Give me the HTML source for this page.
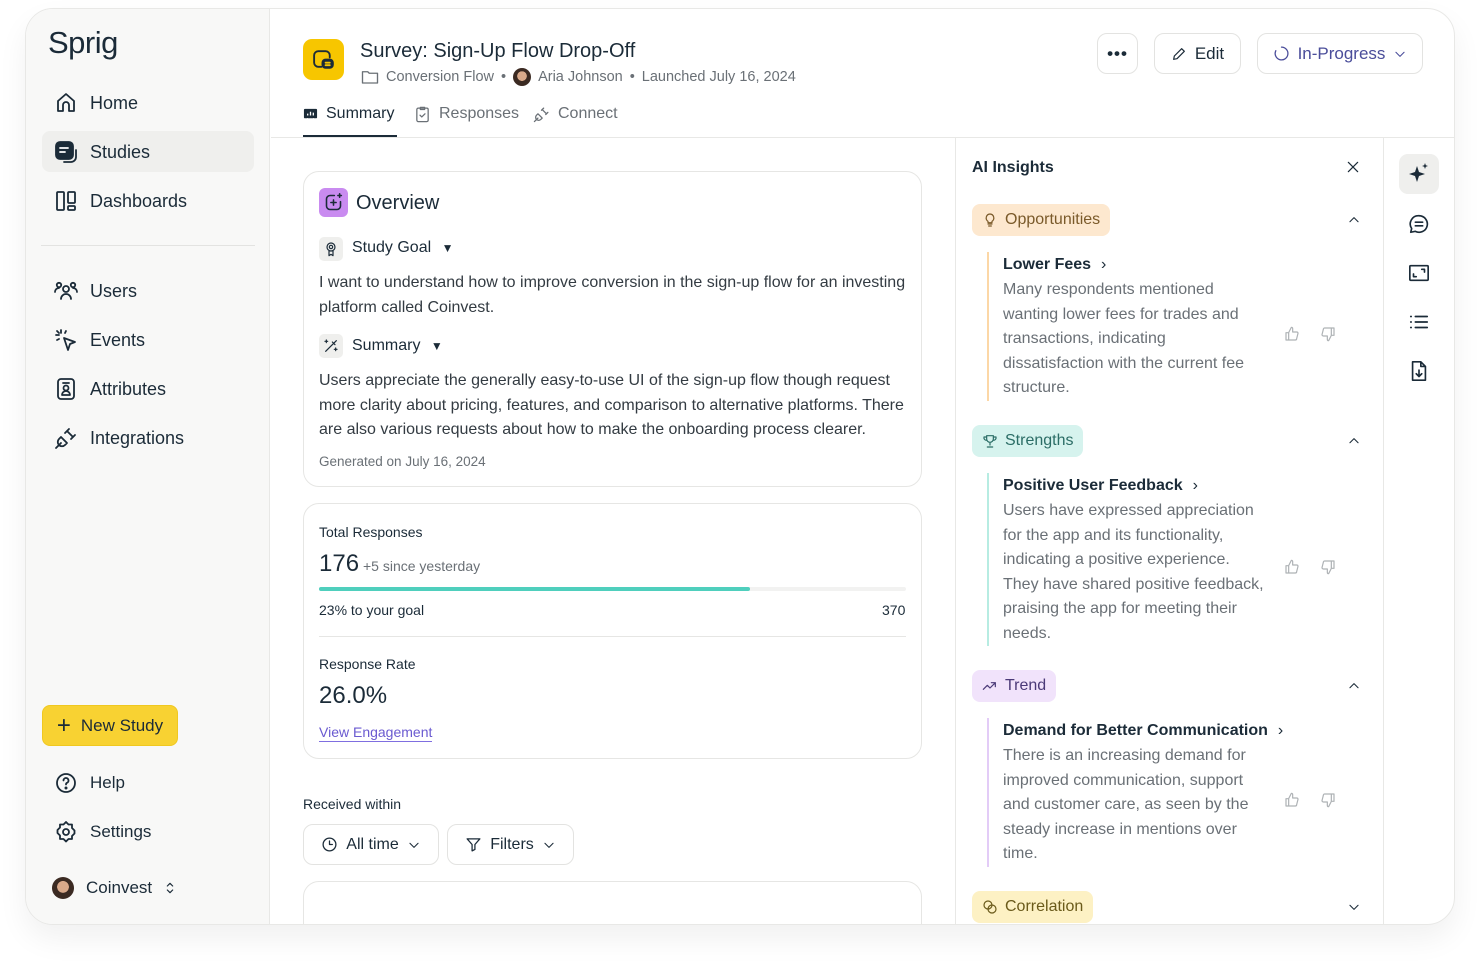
<!DOCTYPE html>
<html><head><meta charset="utf-8"><style>
*{box-sizing:border-box;margin:0;padding:0}
body{width:1480px;height:967px;background:#fff;font-family:"Liberation Sans",sans-serif;color:#1b2b38;position:relative;overflow:hidden}
.a{position:absolute}
.frame{left:25px;top:8px;width:1430px;height:917px;border:1px solid #e8e8e6;border-radius:28px;overflow:hidden;background:#fff;box-shadow:0 14px 30px rgba(0,0,0,.06)}
.side{left:0;top:0;width:244px;height:917px;background:#f8f8f7;border-right:1px solid #e8e8e6}
.nav{position:absolute;left:28px;font-size:18px;display:flex;align-items:center;gap:12px}
.nav svg{width:24px;height:24px;fill:none;stroke:#1b2b38;stroke-width:1.8;stroke-linecap:round;stroke-linejoin:round}
.ic{fill:none;stroke:currentColor;stroke-width:1.8;stroke-linecap:round;stroke-linejoin:round}
.card{position:absolute;background:#fff;border:1px solid #e6e6e4;border-radius:16px}
.btn{position:absolute;border:1px solid #e3e3e1;border-radius:10px;background:#fff;display:flex;align-items:center;justify-content:center;gap:8px;font-size:17px}
.grey{color:#6a7076}
.pill{position:absolute;left:16px;height:32px;border-radius:8px;display:flex;align-items:center;gap:7px;padding:0 10px;font-size:16px}
.item{position:absolute;left:31px;padding-left:14px;border-left:2px solid}
.item h4{font-size:16px;font-weight:bold;line-height:26px;display:flex;align-items:center;gap:10px}
.item p{font-size:16px;line-height:24.5px;color:#6a7076;width:265px}
.chev{position:absolute;left:390px;width:14px;height:14px}
.th{position:absolute;left:328px;width:16px;height:16px;stroke:#aeb2b5}
.td{position:absolute;left:364px;width:16px;height:16px;stroke:#aeb2b5}
</style></head><body>
<div class="a frame">
 <div class="a side">
  <div class="a" style="left:22px;top:16px;font-size:31px;letter-spacing:-0.5px;color:#1b2b38">Sprig</div>
  <div class="nav" style="top:82px"><svg viewBox="0 0 24 24"><path d="M4 20V10l8-7 8 7v10h-5v-6a3 3 0 0 0-6 0v6z"/></svg>Home</div>
  <div class="a" style="left:16px;top:122px;width:212px;height:41px;background:#efefed;border-radius:8px"></div>
  <div class="nav" style="top:131px"><svg viewBox="0 0 24 24"><rect x="2" y="2" width="17" height="17" rx="4" fill="#1b2b38"/><path d="M6 8h8M6 12h5" stroke="#fff"/><path d="M22 10v7a5 5 0 0 1-5 5h-7"/></svg>Studies</div>
  <div class="nav" style="top:180px"><svg viewBox="0 0 24 24"><rect x="3" y="3" width="7" height="18" rx="1"/><rect x="14" y="3" width="7" height="11" rx="1"/><rect x="14" y="17" width="7" height="4" rx="1"/></svg>Dashboards</div>
  <div class="a" style="left:15px;top:236px;width:214px;height:1px;background:#e3e3e1"></div>
  <div class="nav" style="top:270px"><svg viewBox="0 0 24 24"><circle cx="12" cy="10" r="3"/><path d="M7 20a5 5 0 0 1 10 0"/><circle cx="5" cy="6" r="2.2"/><circle cx="19" cy="6" r="2.2"/><path d="M1 13a4 4 0 0 1 4-4M23 13a4 4 0 0 0-4-4"/></svg>Users</div>
  <div class="nav" style="top:319px"><svg viewBox="0 0 24 24"><path d="M10 10l11 4-5 2-2 6z"/><path d="M7 2v3M2 7h3M3 3l2 2M12 3l-1 2M3 12l2-1"/></svg>Events</div>
  <div class="nav" style="top:368px"><svg viewBox="0 0 24 24"><rect x="4" y="2" width="16" height="20" rx="3"/><path d="M9 6h6"/><circle cx="12" cy="11" r="2.5"/><path d="M8 18a4 4 0 0 1 8 0z"/></svg>Attributes</div>
  <div class="nav" style="top:417px"><svg viewBox="0 0 24 24"><path d="M2 22l5-5M7 11l6 6-2 2a4 4 0 0 1-6-6zM13 5l6 6M15 3l-3 3M21 9l-3 3M11 7l4-4M17 13l4-4"/></svg>Integrations</div>
  <div class="a" style="left:16px;top:696px;width:136px;height:41px;background:#f8d232;border-radius:8px;border:1px solid #f0c820;display:flex;align-items:center;justify-content:center;gap:10px;font-size:17px"><span style="font-size:24px;font-weight:300;line-height:1">+</span>New Study</div>
  <div class="nav" style="top:762px;font-size:17px"><svg viewBox="0 0 24 24"><circle cx="12" cy="12" r="9"/><path d="M9.5 9.5a2.5 2.5 0 1 1 3.5 2.3c-.7.3-1 .9-1 1.7"/><circle cx="12" cy="17" r=".6" fill="#1b2b38"/></svg>Help</div>
  <div class="nav" style="top:811px;font-size:17px"><svg viewBox="0 0 24 24"><circle cx="12" cy="12" r="3"/><path d="M12 2l2.5 2.5H18v3.5l2.5 2.5-0 3-2.5 2.5V19h-3.5L12 21.5 9.5 19H6v-3.5L3.5 13v-3L6 7.5V4.5h3.5z"/></svg>Settings</div>
  <div class="a" style="left:26px;top:868px;width:22px;height:22px;border-radius:50%;background:radial-gradient(circle at 50% 45%,#d9a98a 0 35%,#3b2a22 37%)"></div>
  <div class="a" style="left:60px;top:869px;font-size:17px">Coinvest</div>
  <svg class="ic a" viewBox="0 0 24 24" style="left:136px;top:871px;width:16px;height:16px;color:#1b2b38"><path d="M8 9l4-4 4 4M8 15l4 4 4-4"/></svg>
 </div>

 <!-- header -->
 <div class="a" style="left:277px;top:30px;width:41px;height:41px;background:#f7c600;border-radius:9px"><svg class="ic" viewBox="0 0 24 24" style="position:absolute;left:8px;top:8px;width:25px;height:25px;color:#1b2b38"><path d="M10 19H7a4 4 0 0 1-4-4V8a4 4 0 0 1 4-4h7a4 4 0 0 1 4 4v2"/><rect x="11" y="12" width="10" height="8" rx="3" fill="#1b2b38"/><path d="M14 15h4M14 17.5h4" stroke="#f7c600"/></svg></div>
 <div class="a" style="left:334px;top:31px;font-size:20px">Survey: Sign-Up Flow Drop-Off</div>
 <div class="a grey" style="left:335px;top:59px;font-size:14.5px;display:flex;align-items:center;gap:7px"><svg class="ic" viewBox="0 0 24 24" style="width:18px;height:18px"><path d="M2 5h7l2 2h11v13H2z"/></svg>Conversion Flow <span>•</span><span style="width:18px;height:18px;border-radius:50%;background:radial-gradient(circle at 50% 45%,#d9a98a 0 35%,#3b2a22 37%);display:inline-block"></span>Aria Johnson <span>•</span> Launched July 16, 2024</div>
 <div class="a" style="left:277px;top:96px;font-size:16px;display:flex;align-items:center;gap:8px"><svg viewBox="0 0 16 16" style="width:15px;height:15px"><rect x="1" y="2" width="14" height="10" rx="1" fill="#1b2b38"/><path d="M5 12l-1 3M11 12l1 3M5 9V7M8 9V5M11 9V6" stroke="#fff" stroke-width="1.4"/></svg>Summary</div>
 <div class="a" style="left:277px;top:126px;width:94px;height:2px;background:#1b2b38"></div>
 <div class="a grey" style="left:388px;top:96px;font-size:16px;display:flex;align-items:center;gap:8px"><svg class="ic" viewBox="0 0 24 24" style="width:17px;height:17px"><rect x="4" y="3" width="16" height="19" rx="2"/><path d="M9 2h6v3H9zM8.5 13l2.5 2.5 4.5-4.5"/></svg>Responses</div>
 <div class="a grey" style="left:507px;top:96px;font-size:16px;display:flex;align-items:center;gap:8px"><svg class="ic" viewBox="0 0 24 24" style="width:17px;height:17px"><path d="M2 22l5-5M7 11l6 6-2 2a4 4 0 0 1-6-6zM13 5l6 6M15 3l-3 3M21 9l-3 3"/></svg>Connect</div>
 <div class="btn" style="left:1071px;top:24px;width:41px;height:41px;font-weight:bold;letter-spacing:1px">•••</div>
 <div class="btn" style="left:1128px;top:24px;width:87px;height:41px"><svg class="ic" viewBox="0 0 24 24" style="width:16px;height:16px"><path d="M4 20l1-5L16 4l4 4L9 19z"/></svg>Edit</div>
 <div class="btn" style="left:1231px;top:24px;width:166px;height:41px;color:#4a4d9a"><svg class="ic" viewBox="0 0 24 24" style="width:17px;height:17px"><path d="M12 3a9 9 0 1 1-8 5"/></svg>In-Progress<svg class="ic" viewBox="0 0 24 24" style="width:14px;height:14px"><path d="M5 9l7 7 7-7"/></svg></div>
 <div class="a" style="left:245px;top:128px;width:1185px;height:1px;background:#e8e8e6"></div>

 <!-- overview -->
 <div class="card" style="left:277px;top:162px;width:619px;height:316px">
  <div class="a" style="left:15px;top:16px;width:29px;height:29px;border-radius:6px;background:#c98bf0"><svg class="ic" viewBox="0 0 24 24" style="position:absolute;left:4px;top:4px;width:21px;height:21px;color:#1b2b38"><path d="M20 11v5a4 4 0 0 1-4 4H8a4 4 0 0 1-4-4V8a4 4 0 0 1 4-4h5"/><path d="M12 9v6M9 12h6M19 2v4M17 4h4"/></svg></div>
  <div class="a" style="left:52px;top:20px;font-size:20px">Overview</div>
  <div class="a" style="left:15px;top:65px;width:24px;height:24px;border-radius:5px;background:#efefed"><svg class="ic" viewBox="0 0 24 24" style="position:absolute;left:4px;top:3px;width:16px;height:18px"><circle cx="12" cy="9" r="6"/><circle cx="12" cy="9" r="2.5"/><path d="M9 15v7l3-2 3 2v-7"/></svg></div>
  <div class="a" style="left:48px;top:67px;font-size:16px">Study Goal <span style="font-size:12px;margin-left:6px">▼</span></div>
  <div class="a" style="left:15px;top:99px;width:590px;font-size:16px;line-height:24.5px;color:#333b42">I want to understand how to improve conversion in the sign-up flow for an investing platform called Coinvest.</div>
  <div class="a" style="left:15px;top:162px;width:24px;height:24px;border-radius:5px;background:#efefed"><svg class="ic" viewBox="0 0 24 24" style="position:absolute;left:4px;top:4px;width:16px;height:16px"><path d="M4 20L20 4M14 6l4 4M5 3v4M3 5h4M19 15v4M17 17h4"/></svg></div>
  <div class="a" style="left:48px;top:165px;font-size:16px">Summary <span style="font-size:12px;margin-left:6px">▼</span></div>
  <div class="a" style="left:15px;top:197px;width:595px;font-size:16px;line-height:24.5px;color:#333b42">Users appreciate the generally easy-to-use UI of the sign-up flow though request more clarity about pricing, features, and comparison to alternative platforms. There are also various requests about how to make the onboarding process clearer.</div>
  <div class="a grey" style="left:15px;top:282px;font-size:13.5px">Generated on July 16, 2024</div>
 </div>

 <!-- responses -->
 <div class="card" style="left:277px;top:494px;width:619px;height:256px">
  <div class="a" style="left:15px;top:20px;font-size:14px">Total Responses</div>
  <div class="a" style="left:15px;top:46px;font-size:24px">176</div>
  <div class="a grey" style="left:59px;top:54px;font-size:14px">+5 since yesterday</div>
  <div class="a" style="left:15px;top:83px;width:587px;height:4px;background:#f2f2f1;border-radius:2px"><div style="width:431px;height:4px;background:#4fcfbd;border-radius:2px"></div></div>
  <div class="a" style="left:15px;top:98px;font-size:14px">23% to your goal</div>
  <div class="a" style="left:578px;top:98px;font-size:14px">370</div>
  <div class="a" style="left:15px;top:132px;width:587px;height:1px;background:#e6e6e4"></div>
  <div class="a" style="left:15px;top:152px;font-size:14px">Response Rate</div>
  <div class="a" style="left:15px;top:178px;font-size:24px">26.0%</div>
  <div class="a" style="left:15px;top:220px;font-size:14px;color:#6a5ad0;border-bottom:1.5px solid #7f6ee0;padding-bottom:1px">View Engagement</div>
 </div>
 <div class="a" style="left:277px;top:787px;font-size:14px">Received within</div>
 <div class="btn" style="left:277px;top:815px;width:136px;height:41px;font-size:16px"><svg class="ic" viewBox="0 0 24 24" style="width:17px;height:17px"><circle cx="12" cy="12" r="9"/><path d="M12 7v5h4"/></svg>All time<svg class="ic" viewBox="0 0 24 24" style="width:14px;height:14px"><path d="M5 9l7 7 7-7"/></svg></div>
 <div class="btn" style="left:421px;top:815px;width:127px;height:41px;font-size:16px"><svg class="ic" viewBox="0 0 24 24" style="width:17px;height:17px"><path d="M3 4h18l-7 8v7l-4 2v-9z"/></svg>Filters<svg class="ic" viewBox="0 0 24 24" style="width:14px;height:14px"><path d="M5 9l7 7 7-7"/></svg></div>
 <div class="card" style="left:277px;top:872px;width:619px;height:80px"></div>

 <!-- AI insights -->
 <div class="a" style="left:929px;top:128px;width:1px;height:800px;background:#e8e8e6"></div>
 <div class="a" style="left:1357px;top:128px;width:1px;height:800px;background:#e8e8e6"></div>
 <div class="a" style="left:930px;top:128px;width:427px;height:800px">
  <div class="a" style="left:16px;top:22px;font-size:16px;font-weight:bold">AI Insights</div>
  <svg class="ic a" viewBox="0 0 24 24" style="left:389px;top:22px;width:16px;height:16px"><path d="M5 5l14 14M19 5L5 19"/></svg>

  <div class="pill" style="top:67px;background:#fde8cf;color:#7a5a2a"><svg class="ic" viewBox="0 0 24 24" style="width:16px;height:16px"><path d="M9 18h6M10 21h4M12 3a6 6 0 0 0-3 11v2h6v-2a6 6 0 0 0-3-11z"/></svg>Opportunities</div>
  <svg class="ic chev" viewBox="0 0 24 24" style="top:76px;left:391px"><path d="M5 15l7-7 7 7"/></svg>
  <div class="item" style="top:115px;border-color:#fcd7a6"><h4>Lower Fees <span style="font-weight:normal">›</span></h4><p>Many respondents mentioned wanting lower fees for trades and transactions, indicating dissatisfaction with the current fee structure.</p></div>
  <svg class="ic th" viewBox="0 0 24 24" style="top:189px"><path d="M7 10v11H3V10zM7 10l4-8a2 2 0 0 1 2 2v5h6a2 2 0 0 1 2 2l-2 8a2 2 0 0 1-2 2H7"/></svg>
  <svg class="ic td" viewBox="0 0 24 24" style="top:189px"><path d="M17 14V3h4v11zM17 14l-4 8a2 2 0 0 1-2-2v-5H5a2 2 0 0 1-2-2l2-8a2 2 0 0 1 2-2h10"/></svg>

  <div class="pill" style="top:288px;background:#d6f3ee;color:#2b6d66"><svg class="ic" viewBox="0 0 24 24" style="width:16px;height:16px"><path d="M7 4h10v5a5 5 0 0 1-10 0zM7 6H3a4 4 0 0 0 4 5M17 6h4a4 4 0 0 1-4 5M12 14v4M8 21h8"/></svg>Strengths</div>
  <svg class="ic chev" viewBox="0 0 24 24" style="top:297px;left:391px"><path d="M5 15l7-7 7 7"/></svg>
  <div class="item" style="top:336px;border-color:#b7ece2"><h4>Positive User Feedback <span style="font-weight:normal">›</span></h4><p>Users have expressed appreciation for the app and its functionality, indicating a positive experience. They have shared positive feedback, praising the app for meeting their needs.</p></div>
  <svg class="ic th" viewBox="0 0 24 24" style="top:422px"><path d="M7 10v11H3V10zM7 10l4-8a2 2 0 0 1 2 2v5h6a2 2 0 0 1 2 2l-2 8a2 2 0 0 1-2 2H7"/></svg>
  <svg class="ic td" viewBox="0 0 24 24" style="top:422px"><path d="M17 14V3h4v11zM17 14l-4 8a2 2 0 0 1-2-2v-5H5a2 2 0 0 1-2-2l2-8a2 2 0 0 1 2-2h10"/></svg>

  <div class="pill" style="top:533px;background:#f1e3fb;color:#4b3a78"><svg class="ic" viewBox="0 0 24 24" style="width:16px;height:16px"><path d="M2 17l6-6 4 4 8-8M14 7h6v6"/></svg>Trend</div>
  <svg class="ic chev" viewBox="0 0 24 24" style="top:542px;left:391px"><path d="M5 15l7-7 7 7"/></svg>
  <div class="item" style="top:581px;border-color:#e3ccf7"><h4>Demand for Better Communication <span style="font-weight:normal">›</span></h4><p>There is an increasing demand for improved communication, support and customer care, as seen by the steady increase in mentions over time.</p></div>
  <svg class="ic th" viewBox="0 0 24 24" style="top:655px"><path d="M7 10v11H3V10zM7 10l4-8a2 2 0 0 1 2 2v5h6a2 2 0 0 1 2 2l-2 8a2 2 0 0 1-2 2H7"/></svg>
  <svg class="ic td" viewBox="0 0 24 24" style="top:655px"><path d="M17 14V3h4v11zM17 14l-4 8a2 2 0 0 1-2-2v-5H5a2 2 0 0 1-2-2l2-8a2 2 0 0 1 2-2h10"/></svg>

  <div class="pill" style="top:754px;background:#fdf1c4;color:#6a5a1a"><svg class="ic" viewBox="0 0 24 24" style="width:16px;height:16px"><circle cx="9" cy="9" r="6"/><circle cx="15" cy="15" r="6"/></svg>Correlation</div>
  <svg class="ic chev" viewBox="0 0 24 24" style="top:763px;left:391px"><path d="M5 9l7 7 7-7"/></svg>
 </div>

 <!-- rail -->
 <div class="a" style="left:1373px;top:145px;width:40px;height:40px;background:#efefed;border-radius:9px"><svg viewBox="0 0 24 24" style="position:absolute;left:8px;top:8px;width:24px;height:24px" fill="#1b2b38"><path d="M10 4l2 6 6 2-6 2-2 6-2-6-6-2 6-2z"/><path d="M18 1l.8 2.2L21 4l-2.2.8L18 7l-.8-2.2L15 4l2.2-.8z"/></svg></div>
 <svg class="ic a" viewBox="0 0 24 24" style="left:1382px;top:204px;width:22px;height:22px"><path d="M12 3a9 9 0 1 1-4 17l-5 1 1-4a9 9 0 0 1 8-14zM8 10h8M8 14h8"/></svg>
 <svg class="ic a" viewBox="0 0 24 24" style="left:1382px;top:253px;width:22px;height:22px"><rect x="2" y="4" width="20" height="16" rx="1"/><path d="M6 13v3h3M18 11V8h-3"/></svg>
 <svg class="ic a" viewBox="0 0 24 24" style="left:1382px;top:302px;width:22px;height:22px"><path d="M8 6h13M8 12h13M8 18h13M3 6h.5M3 12h.5M3 18h.5"/></svg>
 <svg class="ic a" viewBox="0 0 24 24" style="left:1382px;top:351px;width:22px;height:22px"><path d="M14 2H5v20h14V7zM14 2v5h5M12 11v7M9 15l3 3 3-3"/></svg>
</div>
</body></html>
